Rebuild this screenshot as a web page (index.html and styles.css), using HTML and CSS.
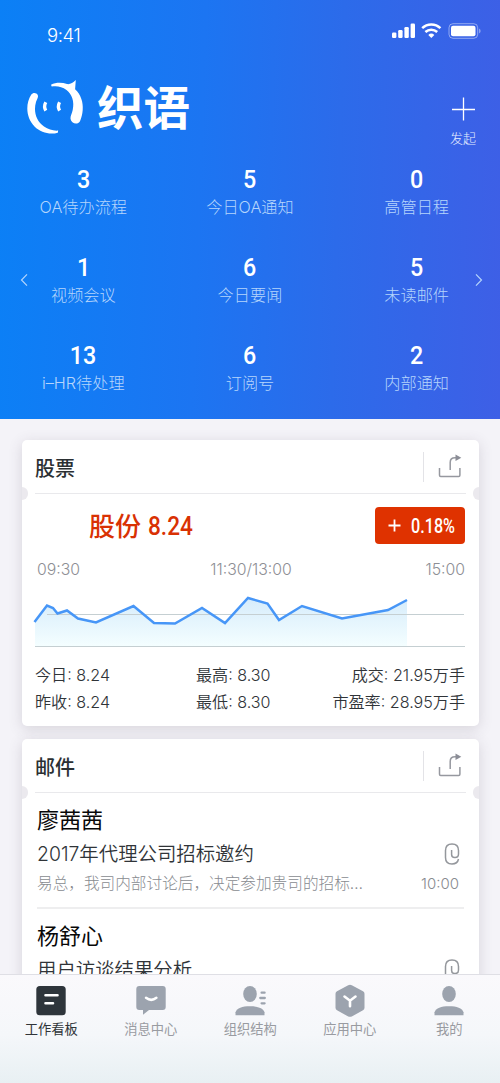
FILE: index.html
```html
<!DOCTYPE html>
<html lang="zh-CN">
<head>
<meta charset="utf-8">
<title>织语</title>
<link rel="stylesheet" href="styles.css">
</head>
<body>
<div class="app">
  <header class="hero">
    <div class="status">
      <span class="clock">9:41</span>
      <svg class="status-icons" width="90" height="20" viewBox="0 0 90 20">
        <g fill="#fff">
          <rect x="0" y="11.500" width="4.400" height="5.500" rx="1.200"/>
          <rect x="6.200" y="9" width="4.400" height="8" rx="1.200"/>
          <rect x="12.400" y="6" width="4.400" height="11" rx="1.200"/>
          <rect x="18.600" y="2.500" width="4.400" height="14.500" rx="1.200"/>
          <rect x="59" y="4.800" width="24.500" height="10.400" rx="2"/>
          <path d="M87.200 7.500a3 3 0 0 1 0 5z" opacity=".5"/>
          <path d="M39.300 17l-3-3a4.400 4.400 0 0 1 6 0z"/>
        </g>
        <g fill="none" stroke="#fff" stroke-width="2.500">
          <path d="M30.200 7.200a13 13 0 0 1 18.200 0"/>
          <path d="M33.400 11a8.600 8.600 0 0 1 11.800 0"/>
        </g>
        <rect x="57" y="2.700" width="28.700" height="14.600" rx="4" fill="none" stroke="#fff" stroke-opacity=".45"/>
      </svg>
    </div>
    <div class="brand-row">
      <svg class="logo" width="58" height="58" viewBox="26 78 58 58" fill="#fff">
        <path d="M31.300 94.600C33 92.200 36.500 92.700 37.700 94.900C38.800 97 36.800 99.500 36 102C33.300 111.500 36 121 44 126.600C48.500 129.800 53 130.900 58.200 130.600L57.800 132.700C50 134.900 40.800 132.800 34.500 126.500C26.500 118.400 24.800 105 31.300 94.600Z"/>
        <path d="M51 84.700C56 82.300 62 82.400 67 84.100C70.200 84.600 72.900 82.800 75.800 80.100L75.100 89.200C80.800 94.500 83.300 102 82.700 110C82.400 114 81.500 117.500 80 121.200C77.700 125.300 71.200 123.700 70.500 118.800C70.200 116.200 72 113.500 72.700 110C74.600 101.500 72 94.200 66.500 90C62 86.600 57 85.600 51.700 86.500Z"/>
        <path d="M45.800 102.200Q43.400 106.400 45.800 110.600M59.600 102.200Q57.200 106.400 59.600 110.600" fill="none" stroke="#fff" stroke-width="3.300"/>
      </svg>
      <h1 class="brand">织语</h1>
      <div class="create">
        <svg width="24" height="24" viewBox="0 0 24 24"><path d="M12.500 .500v23M1 12.500h23" stroke="#fff" stroke-width="1.300"/></svg>
        <span>发起</span>
      </div>
    </div>
    <div class="metrics">
      <div class="metric"><b>3</b><span>OA待办流程</span></div>
      <div class="metric"><b>5</b><span>今日OA通知</span></div>
      <div class="metric"><b>0</b><span>高管日程</span></div>
      <div class="metric"><b>1</b><span>视频会议</span></div>
      <div class="metric"><b>6</b><span>今日要闻</span></div>
      <div class="metric"><b>5</b><span>未读邮件</span></div>
      <div class="metric"><b>13</b><span>i–HR待处理</span></div>
      <div class="metric"><b>6</b><span>订阅号</span></div>
      <div class="metric"><b>2</b><span>内部通知</span></div>
      <svg class="arrow prev" width="8" height="14" viewBox="0 0 8 14"><path d="M7 1.300L1.500 7L7 12.700"/></svg>
      <svg class="arrow next" width="8" height="14" viewBox="0 0 8 14"><path d="M1 1.300L6.500 7L1 12.700"/></svg>
    </div>
  </header>

  <main class="content">
    <section class="card stock">
      <div class="card-head">
        <h2>股票</h2>
        <svg class="share" width="24" height="26" viewBox="0 0 24 26"><path d="M1.500 14v7.300q0 1.200 1.200 1.200h18q1.200 0 1.200-1.200V14M12.200 16V8.500Q12.200 3.800 17 3.800h1" fill="none" stroke="#96989f" stroke-width="1.500"/><path d="M17.500 .600L23.300 3.800L17.500 7z" fill="#8b8d96"/></svg>
      </div>
      <div class="quote">
        <span class="price">股份 <i>8.24</i></span>
        <span class="change"><svg width="13" height="13" viewBox="0 0 13 13"><path d="M6.500 .500v12M.500 6.500h12" stroke="#fff" stroke-width="1.800"/></svg><i>0.18%</i></span>
      </div>
      <div class="times"><span>09:30</span><span>11:30/13:00</span><span>15:00</span></div>
      <svg class="chart" width="434" height="60" viewBox="33 590 434 60">
        <defs><linearGradient id="area" x1="0" y1="0" x2="0" y2="1"><stop offset="0" stop-color="#d6ecfb"/><stop offset="1" stop-color="#f4feff"/></linearGradient></defs>
        <path d="M35 622L47 605.500L53 608L57.500 613.500L67 610.500L78 618.500L96 622.500L133.500 606L154 623L175 623.500L202 608L225 623L248 598L267.500 603.500L279 620L302 606L342 618.500L388 610L407 600V646H35Z" fill="url(#area)"/>
        <path d="M47 614.500H464M35 646.500H465" stroke="#c5cfd2"/>
        <path d="M34.500 622L47 605.500L53 608L57.500 613.500L67 610.500L78 618.500L96 622.500L133.500 606L154 623L175 623.500L202 608L225 623L248 598L267.500 603.500L279 620L302 606L342 618.500L388 610L407 600" fill="none" stroke="#4796f7" stroke-width="2.500"/>
      </svg>
      <div class="stats">
        <span>今日: 8.24</span><span>最高: 8.30</span><span>成交: 21.95万手</span>
        <span>昨收: 8.24</span><span>最低: 8.30</span><span>市盈率: 28.95万手</span>
      </div>
    </section>

    <section class="card mail">
      <div class="card-head">
        <h2>邮件</h2>
        <svg class="share" width="24" height="26" viewBox="0 0 24 26"><path d="M1.500 14v7.300q0 1.200 1.200 1.200h18q1.200 0 1.200-1.200V14M12.200 16V8.500Q12.200 3.800 17 3.800h1" fill="none" stroke="#96989f" stroke-width="1.500"/><path d="M17.500 .600L23.300 3.800L17.500 7z" fill="#8b8d96"/></svg>
      </div>
      <article class="message">
        <h3>廖茜茜</h3>
        <div class="subject"><span>2017年代理公司招标邀约</span>
          <svg class="clip" width="16" height="22" viewBox="0 0 16 22"><path d="M7.600 7v4.500q0 3 3 3h.5q3.400 0 3.400-3.500V7.500Q14.500 1 8 1T1.500 7.500v7Q1.500 21 8 21q5.500 0 6.500-5"/></svg>
        </div>
        <div class="preview"><span>易总，我司内部讨论后，决定参加贵司的招标…</span><time>10:00</time></div>
      </article>
      <article class="message">
        <h3>杨舒心</h3>
        <div class="subject"><span>用户访谈结果分析</span>
          <svg class="clip" width="16" height="22" viewBox="0 0 16 22"><path d="M7.600 7v4.500q0 3 3 3h.5q3.400 0 3.400-3.500V7.500Q14.500 1 8 1T1.500 7.500v7Q1.500 21 8 21q5.500 0 6.500-5"/></svg>
        </div>
      </article>
    </section>
  </main>

  <nav class="tabs">
    <a class="tab active"><svg width="34" height="34" viewBox="0 0 34 34"><rect x="2.300" y="2" width="29.400" height="29.300" rx="3.500" fill="#2e353b"/><path d="M11.500 11.300h12M11.500 19.200h7.500" stroke="#fff" stroke-width="2.600" stroke-linecap="round"/></svg><span>工作看板</span></a>
    <a class="tab"><svg width="34" height="34" viewBox="0 0 34 34"><path d="M5.300 2h23.400q3 0 3 3v18q0 3-3 3H15l-6 4.800V26H5.300q-3 0-3-3V5q0-3 3-3z" fill="#9ca3ae"/><path d="M12 13.800q5.200 4.200 10.400 0" fill="none" stroke="#fff" stroke-width="2.500" stroke-linecap="round"/></svg><span>消息中心</span></a>
    <a class="tab"><svg width="34" height="34" viewBox="0 0 34 34" fill="#9ca3ae"><ellipse cx="17" cy="10" rx="6.800" ry="8"/><path d="M2.500 31.200v-3C4 24 9 22.300 17 22.300s13 1.700 14.500 5.900v3z"/><path d="M28.600 8.700h3M27.300 14h4.500M28.600 19.300h3" stroke="#9ca3ae" stroke-width="2.300" stroke-linecap="round"/></svg><span>组织结构</span></a>
    <a class="tab"><svg width="34" height="34" viewBox="0 0 34 34"><path d="M15.200 1.200q1.800-.9 3.600 0L30 7.300q1.500.8 1.500 2.500v14q0 1.700-1.500 2.500l-11.200 6.100q-1.800.9-3.600 0L4 26.300q-1.500-.8-1.500-2.500v-14q0-1.700 1.500-2.500z" fill="#9ca3ae"/><path d="M11.500 12.500l5.500 4.200l5.500-4.200M17 16.700v5.500" fill="none" stroke="#fff" stroke-width="2.600" stroke-linecap="round"/></svg><span>应用中心</span></a>
    <a class="tab"><svg width="34" height="34" viewBox="0 0 34 34" fill="#9ca3ae"><ellipse cx="17" cy="10" rx="6.800" ry="8"/><path d="M2.500 31.200v-3C4 24 9 22.300 17 22.300s13 1.700 14.500 5.900v3z"/></svg><span>我的</span></a>
  </nav>
</div>
</body>
</html>
```
FILE: styles.css
```css
* { box-sizing: border-box; }
body { margin: 0; font-family: Inter, "Noto Sans CJK SC", sans-serif; color: #303438; }
h1, h2, h3 { margin: 0; }
i { font-style: normal; }
svg { display: block; flex: none; }
.app { width: 500px; height: 1083px; overflow: hidden; display: flex; flex-direction: column; background: #f4f3f8; }

.hero { flex: none; height: 419px; background: linear-gradient(92deg, #0b80f6 0%, #1c75f2 40%, #2c6bea 67%, #3e5fe6 100%); color: #fff; }
.status { height: 70px; padding: 20px 18px 0 47px; display: flex; justify-content: space-between; }
.clock { font-size: 18.500px; line-height: 30px; font-weight: 300; letter-spacing: -.4px; }
.status-icons { margin-top: 1px; }
.brand-row { height: 94px; padding: 8px 24px 0 26px; display: flex; }
.brand { margin: -1px 0 0 13px; font: 700 46.500px/56px "Noto Sans CJK SC", sans-serif; }
.create { margin: 19px 0 0 auto; display: flex; flex-direction: column; align-items: center; font-size: 13px; line-height: 20px; font-weight: 300; gap: 7px; color: #e4ecff; }
.metrics { position: relative; display: grid; grid-template-columns: repeat(3, 1fr); grid-auto-rows: 88px; }
.metric { display: flex; flex-direction: column; align-items: center; }
.metric b { font: 500 26.500px/29px Roboto, sans-serif; transform: scaleX(.88); }
.metric span { margin-top: 2px; font-size: 16.200px; line-height: 24px; font-weight: 300; color: #b5d5fc; }
.arrow { position: absolute; top: 109px; fill: none; stroke: #b5d5fc; stroke-width: 1.200; }
.prev { left: 20px; }
.next { right: 17px; }

.content { flex: 1; min-height: 0; overflow: hidden; padding: 21px 21px 0 22px; display: flex; flex-direction: column; gap: 13px; }
.card { flex: none; position: relative; background: #fff; border-radius: 5px; box-shadow: 0 3px 14px rgba(70, 60, 80, .17); }
.stock { height: 286px; }
.mail { height: 380px; }
.card-head { height: 54px; margin: 0 13px; border-bottom: 1px solid #e9e9ec; display: flex; justify-content: space-between; align-items: center; }
.card-head::before, .card-head::after { content: ""; position: absolute; top: 47px; width: 6px; height: 13px; background: #ebe9ee; }
.card-head::before { left: 0; border-radius: 0 7px 7px 0; }
.card-head::after { right: 0; border-radius: 7px 0 0 7px; }
.card-head h2 { padding-top: 2px; font: 500 20px/28px "Noto Sans CJK SC", sans-serif; color: #2b3033; }
.share { box-sizing: content-box; padding: 2px 4px 2px 14px; border-left: 1px solid #e3e3e7; }
.quote { height: 63px; padding: 13px 14px 0 67px; display: flex; justify-content: space-between; }
.price { font: 500 26px/36px "Noto Sans CJK SC", sans-serif; color: #d93103; display: flex; gap: 7px; }
.price i { font: 500 26px/38px Roboto, sans-serif; transform: scaleX(.87); transform-origin: left; }
.change { width: 90px; height: 37px; border-radius: 4px; background: #df3200; color: #fff; display: flex; align-items: center; padding-left: 13px; gap: 10px; }
.change i { font: 500 20px/38px Roboto, sans-serif; transform: scaleX(.81); transform-origin: left; white-space: nowrap; }
.times { display: grid; grid-template-columns: 1fr auto 1fr; padding: 1px 14px 0 15px; font-size: 15.800px; line-height: 24px; font-weight: 300; color: #8e8f95; }
.times span:last-child { text-align: right; }
.chart { margin: 8px 0 0 11px; }
.stats { padding: 12px 14px 0 13px; display: grid; grid-template-columns: 144px 92px 1fr; column-gap: 17px; font-size: 16.100px; line-height: 27px; font-weight: 350; white-space: nowrap; }
.stats span:nth-child(3n) { text-align: right; }
.message { margin: 0 15px; height: 116px; padding-top: 9px; border-bottom: 2px solid #eeeeef; }
.message h3 { font: 400 22px/32px "Noto Sans CJK SC", sans-serif; color: #080808; }
.subject { display: flex; justify-content: space-between; align-items: center; font-size: 19.400px; height: 38px; line-height: 38px; padding-top: 1px; font-weight: 350; padding-right: 4px; }
.clip { fill: none; stroke: #94979c; stroke-width: 1.500; }
.preview { display: flex; justify-content: space-between; font-size: 15.650px; line-height: 24px; font-weight: 300; color: #888b90; padding-right: 5px; }
.preview time { font-size: 15px; }

.tabs { flex: none; height: 109px; display: grid; grid-template-columns: repeat(5, 99.500px); padding: 9px 0 0 1.500px; border-top: 1px solid #dfdfe5; background: linear-gradient(#faf9fc, #f5f7fa 55%, #e8f0f3); }
.tab { display: flex; flex-direction: column; align-items: center; font-size: 13.300px; line-height: 23px; color: #999ba1; }
.active { color: #303438; }
```
